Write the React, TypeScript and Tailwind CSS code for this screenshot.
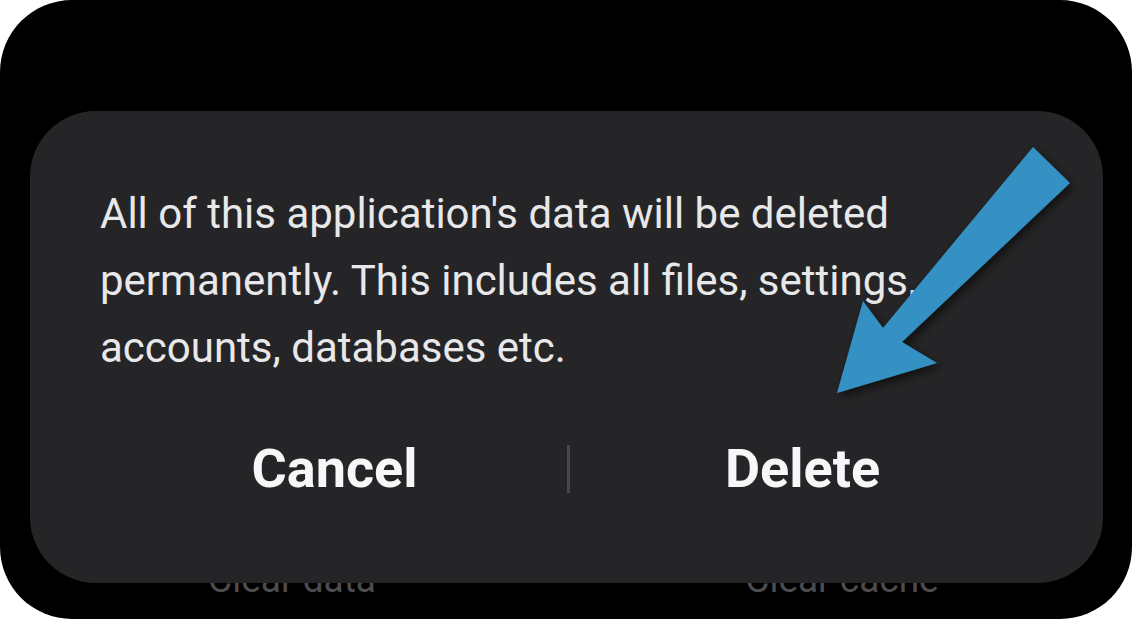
export default function App() {
  return (
    <div className="w-[1133px] h-[620px] bg-white" style={{ fontFamily: "Roboto, 'Noto Sans', sans-serif" }}>
      <div className="relative w-[1132px] h-[619px] bg-black rounded-[72px] overflow-hidden">
        {/* background screen, behind the dialog */}
        <div className="absolute left-0 right-0 top-[552px] flex text-[37px] text-[#4d4d4f]">
          <div className="w-[584px] text-center">Clear data</div>
          <div className="w-[516px] text-center">Clear cache</div>
        </div>

        {/* dialog */}
        <div className="absolute left-[30px] top-[111px] w-[1073px] h-[472px] bg-[#252527] rounded-[66px]">
          <p className="pl-[70px] pr-[60px] pt-[69px] text-[42px] leading-[67px] text-[#e8e8ea]">
            All of this application's data will be deleted
            <br />
            permanently. This includes all files, settings,
            <br />
            accounts, databases etc.
          </p>
          <div className="flex items-center mt-[58px] pl-[72px] pr-[68px]">
            <button className="flex-1 text-center text-[54px] leading-[60px] font-bold text-[#f7f7f9]">Cancel</button>
            <div className="w-[3px] h-[48px] bg-[#48484a]" />
            <button className="flex-1 text-center text-[54px] leading-[60px] font-bold text-[#f7f7f9]">Delete</button>
          </div>
        </div>

        {/* annotation arrow */}
        <svg className="absolute left-0 top-0" width="1132" height="619" viewBox="0 0 1132 619">
          <defs>
            <filter id="sh" x="-20%" y="-20%" width="140%" height="140%">
              <feDropShadow dx="3" dy="4" stdDeviation="5" floodColor="#000" floodOpacity="0.6" />
            </filter>
          </defs>
          <polygon
            points="1033,147 1070,183 902,342 937,363 837,393 863,301 883,328"
            fill="#3590c4"
            filter="url(#sh)"
          />
        </svg>
      </div>
    </div>
  );
}
